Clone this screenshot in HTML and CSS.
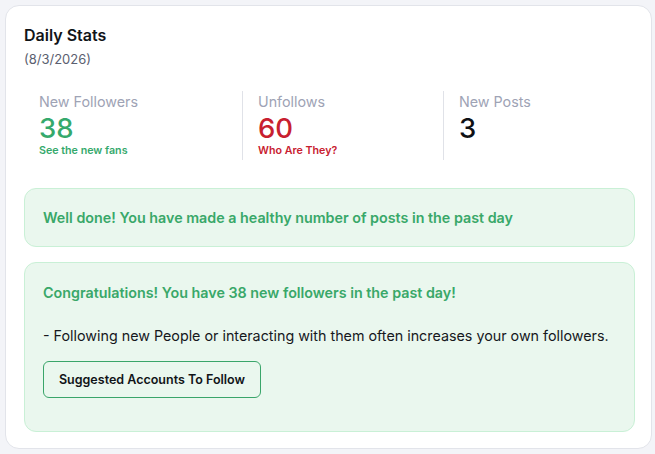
FILE: index.html
```html
<!DOCTYPE html>
<html>
<head>
<meta charset="utf-8">
<link rel="stylesheet" href="styles.css">
</head>
<body>
<div class="card">
  <div class="title">Daily Stats</div>
  <div class="date">(8/3/2026)</div>
  <div class="stats">
    <div class="stat">
      <div class="label">New Followers</div>
      <div class="value green">38</div>
      <div class="link green">See the new fans</div>
    </div>
    <div class="stat divided">
      <div class="label">Unfollows</div>
      <div class="value red">60</div>
      <div class="link red">Who Are They?</div>
    </div>
    <div class="stat divided">
      <div class="label">New Posts</div>
      <div class="value dark">3</div>
    </div>
  </div>
  <div class="alert alert-short">
    <div class="alert-title">Well done! You have made a healthy number of posts in the past day</div>
  </div>
  <div class="alert alert-long">
    <div class="alert-title">Congratulations! You have 38 new followers in the past day!</div>
    <div class="alert-body">- Following new People or interacting with them often increases your own followers.</div>
    <button class="btn">Suggested Accounts To Follow</button>
  </div>
</div>
</body>
</html>
```
FILE: styles.css
```css
html, body {
  margin: 0;
  padding: 0;
  background: #f3f4f8;
}
body {
  padding: 5px 3px 5px 5px;
  font-family: Inter, "Noto Sans", sans-serif;
}
.card {
  background: #ffffff;
  border: 1px solid #e2e4ea;
  border-radius: 14px;
  padding: 19px 16px 17px 18px;
  height: 444px;
  box-sizing: border-box;
}
.title {
  font-size: 16px;
  font-weight: 600;
  color: #111418;
  line-height: 20px;
}
.date {
  font-size: 13px;
  color: #5b6070;
  line-height: 16px;
  margin-top: 6px;
}
.stats {
  display: grid;
  grid-template-columns: 218px 201px 1fr;
  margin-top: 24px;
}
.stat {
  padding-left: 15px;
  min-height: 69px;
}
.stat.divided {
  border-left: 1px solid #e0e2e8;
  padding-left: 15px;
}
.label {
  font-size: 14.3px;
  color: #9ea3b5;
  line-height: 18px;
  margin-top: 2px;
}
.value {
  font-size: 27.5px;
  line-height: 30px;
  font-weight: 500;
  margin-top: 2px;
}
.link {
  font-size: 10.7px;
  font-weight: 600;
  line-height: 14px;
  margin-top: 1px;
}
.green { color: #35a96c; }
.red { color: #c8202f; }
.dark { color: #0f1115; }
.alert {
  background: #eaf7ee;
  border: 1px solid #c9f0d6;
  border-radius: 12px;
  padding: 0 18px;
}
.alert-short {
  margin-top: 28px;
  height: 59px;
  box-sizing: border-box;
  display: flex;
  align-items: center;
}
.alert-long {
  margin-top: 15px;
  padding-top: 21px;
  height: 170px;
  box-sizing: border-box;
}
.alert-title {
  font-size: 14.3px;
  font-weight: 600;
  color: #39a869;
  line-height: 18px;
}
.alert-body {
  font-size: 14.3px;
  color: #16181d;
  line-height: 18px;
  margin-top: 25px;
  white-space: nowrap;
}
.btn {
  margin-top: 16px;
  height: 37px;
  padding: 0 14px;
  background: transparent;
  border: 1px solid #3aa56a;
  border-radius: 6px;
  font-family: Inter, "Noto Sans", sans-serif;
  font-size: 12.5px;
  font-weight: 600;
  color: #111418;
  width: 218px;
}
```
